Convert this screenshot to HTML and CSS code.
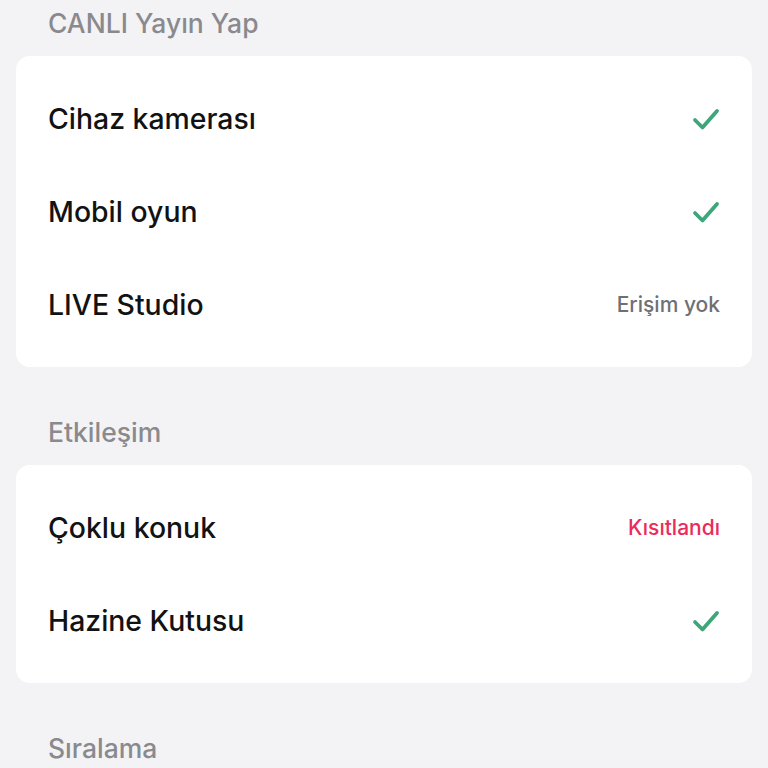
FILE: index.html
```html
<!DOCTYPE html>
<html lang="tr">
<head>
    <meta charset="UTF-8">
    <meta name="viewport" content="width=device-width, initial-scale=1.0">
    <title>CANLI Ayarları</title>
    <link rel="stylesheet" href="styles.css">
</head>
<body>
    <div class="page">
        <h3 class="section-title first">CANLI Yayın Yap</h3>
        <div class="card">
            <div class="row">
                <span class="label">Cihaz kamerası</span>
                <svg class="check" viewBox="0 0 28 24"><path d="M3 13 L10.5 20.5 L25 4"/></svg>
            </div>
            <div class="row">
                <span class="label">Mobil oyun</span>
                <svg class="check" viewBox="0 0 28 24"><path d="M3 13 L10.5 20.5 L25 4"/></svg>
            </div>
            <div class="row">
                <span class="label">LIVE Studio</span>
                <span class="status">Erişim yok</span>
            </div>
        </div>

        <h3 class="section-title">Etkileşim</h3>
        <div class="card">
            <div class="row">
                <span class="label">Çoklu konuk</span>
                <span class="status red">Kısıtlandı</span>
            </div>
            <div class="row">
                <span class="label">Hazine Kutusu</span>
                <svg class="check" viewBox="0 0 28 24"><path d="M3 13 L10.5 20.5 L25 4"/></svg>
            </div>
        </div>

        <h3 class="section-title">Sıralama</h3>
    </div>
</body>
</html>
```

FILE: styles.css
```css
body {
    margin: 0;
    background-color: #f3f3f5;
    font-family: Inter, "Noto Sans", sans-serif;
    color: #121212;
}
.page {
    padding: 0 16px;
}
.section-title {
    margin: 50px 0 18px;
    padding-left: 32px;
    font-size: 26.5px;
    line-height: 30px;
    font-weight: 500;
    color: #8a8a8e;
}
.section-title.first {
    margin-top: 8px;
}
.card {
    background-color: #fff;
    border-radius: 14px;
    padding: 16px 32px;
}
.row {
    height: 93px;
    display: flex;
    align-items: center;
    justify-content: space-between;
}
.label {
    font-size: 28.4px;
    font-weight: 500;
}
.status {
    font-size: 21px;
    font-weight: 500;
    color: #6f7075;
}
.status.red {
    color: #ea2b5b;
}
.check {
    width: 28px;
    height: 24px;
    fill: none;
    stroke: #3da67a;
    stroke-width: 3.8;
    stroke-linecap: round;
    stroke-linejoin: round;
}
```
